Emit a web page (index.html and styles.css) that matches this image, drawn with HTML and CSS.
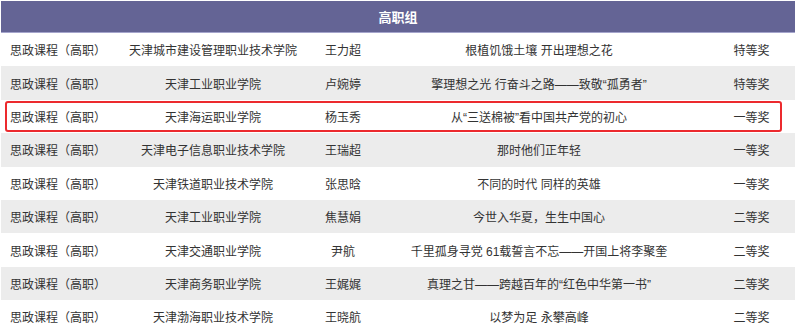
FILE: index.html
```html
<!DOCTYPE html>
<html lang="zh">
<head>
<meta charset="utf-8">
<link rel="stylesheet" href="styles.css">
</head>
<body>
<div class="wrap">
  <div class="head">高职组</div>
  <div class="row"><div class="c1">思政课程（高职）</div><div class="cc">天津城市建设管理职业技术学院</div><div class="cc">王力超</div><div class="cc">根植饥饿土壤 开出理想之花</div><div class="cc">特等奖</div></div>
  <div class="row alt"><div class="c1">思政课程（高职）</div><div class="cc">天津工业职业学院</div><div class="cc">卢婉婷</div><div class="cc">擎理想之光 行奋斗之路——致敬“孤勇者”</div><div class="cc">特等奖</div></div>
  <div class="row hl"><div class="c1">思政课程（高职）</div><div class="cc">天津海运职业学院</div><div class="cc">杨玉秀</div><div class="cc">从“三送棉被”看中国共产党的初心</div><div class="cc">一等奖</div><span class="mark"></span></div>
  <div class="row alt"><div class="c1">思政课程（高职）</div><div class="cc">天津电子信息职业技术学院</div><div class="cc">王瑞超</div><div class="cc">那时他们正年轻</div><div class="cc">一等奖</div></div>
  <div class="row"><div class="c1">思政课程（高职）</div><div class="cc">天津铁道职业技术学院</div><div class="cc">张思晗</div><div class="cc">不同的时代 同样的英雄</div><div class="cc">一等奖</div></div>
  <div class="row alt"><div class="c1">思政课程（高职）</div><div class="cc">天津工业职业学院</div><div class="cc">焦慧娟</div><div class="cc">今世入华夏，生生中国心</div><div class="cc">二等奖</div></div>
  <div class="row"><div class="c1">思政课程（高职）</div><div class="cc">天津交通职业学院</div><div class="cc">尹航</div><div class="cc">千里孤身寻党 61载誓言不忘——开国上将李聚奎</div><div class="cc">二等奖</div></div>
  <div class="row alt"><div class="c1">思政课程（高职）</div><div class="cc">天津商务职业学院</div><div class="cc">王娓娓</div><div class="cc">真理之甘——跨越百年的“红色中华第一书”</div><div class="cc">二等奖</div></div>
  <div class="row"><div class="c1">思政课程（高职）</div><div class="cc">天津渤海职业技术学院</div><div class="cc">王晓航</div><div class="cc">以梦为足 永攀高峰</div><div class="cc">二等奖</div></div>
</div>
</body>
</html>
```
FILE: styles.css
```css
html, body { margin: 0; padding: 0; background: #fff; }
body {
  font-family: "Liberation Sans", "Noto Sans CJK SC", sans-serif;
  font-size: 12px;
  color: #333;
}
.wrap { padding: 1px 2px 0 1px; }
.head {
  height: 31px;
  background: #646495;
  border-bottom: 1px solid #a5a5cc;
  color: #fff;
  font-weight: bold;
  font-size: 13px;
  display: flex;
  align-items: center;
  justify-content: center;
}
.row {
  position: relative;
  height: 33.4px;
  display: grid;
  grid-template-columns: 109px 206px 54px 338px 87px;
  align-items: center;
  white-space: nowrap;
}
.alt { background: #ececec; }
.c1 { padding-left: 9px; }
.cc { text-align: center; }
.mark {
  position: absolute;
  left: 4px;
  right: 13px;
  top: 1px;
  bottom: 1px;
  border: 2px solid #ec2a2e;
  border-radius: 3px;
}
```
